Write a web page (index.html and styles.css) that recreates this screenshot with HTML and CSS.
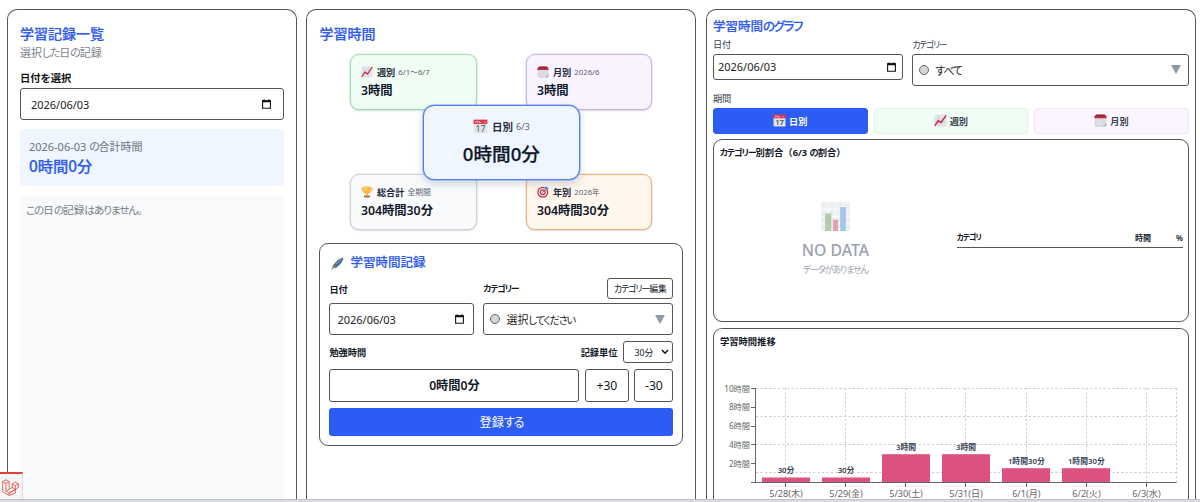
FILE: index.html
```html
<!DOCTYPE html>
<html lang="ja">
<head>
    <meta charset="UTF-8">
    <title>学習時間</title>
    <link rel="stylesheet" href="styles.css">
</head>
<body>
    <svg class="defs" width="0" height="0">
        <defs>
            <symbol id="i-date" viewBox="0 0 9 10">
                <path d="M0.6 1.8h7.8v7.4H0.6z" fill="none" stroke="#111" stroke-width="1.1"/>
                <path d="M0.2 1.3h8.6v2H0.2zM1.6 0.2h1v1.4h-1zM6.4 0.2h1v1.4h-1z" fill="#111"/>
            </symbol>
            <symbol id="i-week" viewBox="0 0 24 24">
                <rect x="1" y="1" width="22" height="22" rx="2" fill="#e3e5e8"/>
                <path d="M1 8h22M1 15h22M8 1v22M15 1v22" stroke="#cdd2d6" stroke-width="1.2"/>
                <path d="M2 21l6-9 5 4L22 3" fill="none" stroke="#cf1f3f" stroke-width="2.5" stroke-linejoin="round" stroke-linecap="round"/>
            </symbol>
            <symbol id="i-month" viewBox="0 0 24 24">
                <path d="M2 7h20v14l-2 2H4l-2-2z" fill="#dcdde3" stroke="#c6c8cf"/>
                <path d="M4 1h16l3 3v4H1V4z" fill="#b92b3f"/>
                <path d="M5 2.500h14" stroke="#7d2332" stroke-width="2"/>
                <path d="M16 23l7-7v5l-2 2z" fill="#b4b7bf"/>
            </symbol>
            <symbol id="i-day" viewBox="0 0 24 24">
                <path d="M1 7h22v16H1z" fill="#e3e5e9"/>
                <path d="M1 1h22v7H1z" fill="#dd3648"/>
                <path d="M4 6l2-3 2 3M10 3v3h3M18 5h2" fill="none" stroke="#fff" stroke-width="1.2"/>
                <text x="12" y="21" text-anchor="middle" font-size="14" fill="#4d5660">17</text>
            </symbol>
            <symbol id="i-cup" viewBox="0 0 24 24">
                <path d="M6 4H2v2c0 4 2 6 6 7M18 4h4v2c0 4-2 6-6 7" fill="none" stroke="#eda62f" stroke-width="2"/>
                <path d="M5 1h14v8c0 4-3 6-5 7v3h-4v-3c-2-1-5-3-5-7z" fill="#f6b83c"/>
                <path d="M8 2h3v9c-2-1-3-3-3-5z" fill="#ffd878"/>
                <path d="M6 19h12v4H6z" fill="#b46a4c"/>
            </symbol>
            <symbol id="i-target" viewBox="0 0 24 24">
                <circle cx="11.500" cy="12.500" r="11" fill="#cf3044"/>
                <circle cx="11.500" cy="12.500" r="8.500" fill="#f4e9eb"/>
                <circle cx="11.500" cy="12.500" r="6" fill="#cf3044"/>
                <circle cx="11.500" cy="12.500" r="3.500" fill="#f4e9eb"/>
                <path d="M11 13l8-8" stroke="#4c5c6b" stroke-width="1.6"/>
                <path d="M16 7V3l3-3 1 3 4 1-4 4z" fill="#5a93cf"/>
            </symbol>
            <symbol id="i-pen" viewBox="0 0 24 24">
                <path d="M0 24l4-9 4 4z" fill="#8b9198"/>
                <path d="M4 16C8 8 15 3 23 1c-1 8-7 15-15 19z" fill="#4b6f93"/>
                <path d="M9 13L20 3" stroke="#9fb5c4" stroke-width="1.6"/>
                <path d="M4 15l6 5" stroke="#6e7d62" stroke-width="3"/>
            </symbol>
            <symbol id="i-bars" viewBox="0 0 28 28">
                <rect width="28" height="28" rx="2" fill="#eceff1"/>
                <path d="M0 7h28M0 14h28M0 21h28M7 0v28M14 0v28M21 0v28" stroke="#fafbfc" stroke-width="1"/>
                <path d="M4 11h6v17H4z" fill="#b4cba8"/>
                <path d="M11.5 17h5v11h-5z" fill="#ea9fad"/>
                <path d="M18.500 5h5.500v23h-5.500z" fill="#a2c5ea"/>
            </symbol>
        </defs>
    </svg>

    <main class="columns">
        <section class="panel list">
            <h1>学習記録一覧</h1>
            <p class="lead">選択<span class="kana">した</span>日<span class="kana">の</span>記録</p>
            <h3>日付を選択</h3>
            <div class="field date wide">2026/06/03<svg><use href="#i-date"/></svg></div>
            <div class="total">
                <p>2026-06-03 <span class="kana">の</span>合計時間</p>
                <strong>0時間0分</strong>
            </div>
            <div class="records"><span class="kana">この</span>日<span class="kana">の</span>記録<span class="kana">はありません。</span></div>
        </section>

        <section class="panel time">
            <h1>学習時間</h1>
            <div class="summary">
                <div class="card week">
                    <p><svg><use href="#i-week"/></svg><b>週別</b><small>6/1〜6/7</small></p>
                    <strong>3時間</strong>
                </div>
                <div class="card month">
                    <p><svg><use href="#i-month"/></svg><b>月別</b><small>2026/6</small></p>
                    <strong>3時間</strong>
                </div>
                <div class="card all">
                    <p><svg><use href="#i-cup"/></svg><b>総合計</b><small>全期間</small></p>
                    <strong>304時間30分</strong>
                </div>
                <div class="card year">
                    <p><svg><use href="#i-target"/></svg><b>年別</b><small>2026年</small></p>
                    <strong>304時間30分</strong>
                </div>
                <div class="card day">
                    <p><svg><use href="#i-day"/></svg><b>日別</b><small>6/3</small></p>
                    <strong>0時間0分</strong>
                </div>
            </div>

            <div class="form">
                <h2><svg><use href="#i-pen"/></svg>学習時間記録</h2>
                <div class="pair">
                    <div class="col-date">
                        <div class="label-row"><b>日付</b></div>
                        <div class="field date">2026/06/03<svg><use href="#i-date"/></svg></div>
                    </div>
                    <div class="col-cat">
                        <div class="label-row"><b class="kana small">カテゴリー</b><button class="edit"><span class="kana">カテゴリー</span>編集</button></div>
                        <div class="field select"><i class="dot"></i>選択<span class="kana small">してください</span><i class="arrow"></i></div>
                    </div>
                </div>
                <div class="unit-row">
                    <b>勉強時間</b><b class="unit">記録単位</b>
                    <div class="unit-select">30分<svg viewBox="0 0 8 6"><path d="M1 1l3 3.200L7 1" fill="none" stroke="#111" stroke-width="1.5"/></svg></div>
                </div>
                <div class="step-row">
                    <output>0時間0分</output>
                    <button>+30</button>
                    <button class="minus">-30</button>
                </div>
                <button class="submit">登録<span class="kana">する</span></button>
            </div>
        </section>

        <section class="panel graph">
            <h2>学習時間<span class="kana">のグラフ</span></h2>
            <div class="filters">
                <div>
                    <label>日付</label>
                    <div class="field date">2026/06/03<svg><use href="#i-date"/></svg></div>
                </div>
                <div>
                    <label><span class="kana small">カテゴリー</span></label>
                    <div class="field select"><i class="dot"></i><span class="kana">すべて</span><i class="arrow"></i></div>
                </div>
            </div>
            <label>期間</label>
            <div class="tabs">
                <button class="active"><svg><use href="#i-day"/></svg>日別</button>
                <button class="week"><svg><use href="#i-week"/></svg>週別</button>
                <button class="month"><svg><use href="#i-month"/></svg>月別</button>
            </div>
            <div class="box ratio">
                <h4><span class="kana small">カテゴリー</span>別割合（6/3 <span class="kana">の</span>割合）</h4>
                <div class="ratio-body">
                    <div class="nodata">
                        <svg><use href="#i-bars"/></svg>
                        <strong>NO DATA</strong>
                        <p><span class="kana small">データがありません</span></p>
                    </div>
                    <div class="thead"><span class="kana small">カテゴリ</span><span>時間</span><span>%</span></div>
                </div>
            </div>
            <div class="box trend">
                <h4>学習時間推移</h4>
                <svg class="chart" viewBox="713 350 476 149">
                    <g stroke="#ccc" stroke-dasharray="2.200 2.200">
                        <path d="M755 388.500H1175.500M755 416.500H1175.500M755 444.500H1175.500M755 472.500H1175.500"/>
                        <path d="M784.500 388v94M844.500 388v94M904.500 388v94M964.500 388v94M1025.500 388v94M1085.500 388v94M1145.500 388v94M1175.500 388v94"/>
                    </g>
                    <g fill="#dd517e">
                        <rect x="761" y="477.500" width="48" height="4.500"/>
                        <rect x="821" y="477.500" width="48" height="4.500"/>
                        <rect x="881" y="454.200" width="48" height="27.800"/>
                        <rect x="941" y="454.200" width="48" height="27.800"/>
                        <rect x="1001" y="468.200" width="48" height="13.800"/>
                        <rect x="1061" y="468.200" width="48" height="13.800"/>
                    </g>
                    <path d="M754.500 388v94M750 482.500H1175.500M750 388.500h5M750 407.500h5M750 426.500h5M750 444.500h5M750 463.500h5M784.500 482v5M844.500 482v5M904.500 482v5M964.500 482v5M1025.500 482v5M1085.500 482v5M1145.500 482v5" fill="none" stroke="#666"/>
                    <g class="y-axis">
                        <text x="749" y="391.500">10時間</text>
                        <text x="749" y="410.300">8時間</text>
                        <text x="749" y="429.200">6時間</text>
                        <text x="749" y="447.900">4時間</text>
                        <text x="749" y="466.500">2時間</text>
                    </g>
                    <g class="x-axis">
                        <text x="785" y="497">5/28(木)</text>
                        <text x="845" y="497">5/29(金)</text>
                        <text x="905" y="497">5/30(土)</text>
                        <text x="965" y="497">5/31(日)</text>
                        <text x="1025.300" y="497">6/1(月)</text>
                        <text x="1085.500" y="497">6/2(火)</text>
                        <text x="1145.500" y="497">6/3(水)</text>
                    </g>
                    <g class="values">
                        <text x="785" y="473">30分</text>
                        <text x="845" y="473">30分</text>
                        <text x="905" y="449.700">3時間</text>
                        <text x="965" y="449.700">3時間</text>
                        <text x="1025.300" y="463.600">1時間30分</text>
                        <text x="1085.300" y="463.600">1時間30分</text>
                    </g>
                </svg>
            </div>
        </section>
    </main>

    <div class="debugbar">
        <svg viewBox="0 0 50 52"><path d="M1 8l10-6 10 6v23l9-5V15l10-6 9 6v11l-9 6v11L21 50 1 39zM1 8l10 6 10-6M11 14v23l10 6M30 15l10 6 9-6M40 21v11l-19 11v7M30 26l10 6M21 31l-10 6M21 43l19-11" fill="none" stroke="#e0443a" stroke-width="2.400" stroke-linejoin="round"/></svg>
    </div>
    <div class="edge"></div>
</body>
</html>
```
FILE: styles.css
```css
* {
    box-sizing: border-box;
    margin: 0;
    padding: 0;
}
body {
    height: 502px;
    overflow: hidden;
    background: #fff;
    color: #111827;
    font-family: "Noto Sans", "Noto Sans CJK JP", sans-serif;
    font-size: 11px;
}
svg {
    flex: none;
}
.defs {
    position: absolute;
}
button {
    font-family: inherit;
    color: inherit;
    background: #fff;
    border: 1px solid #555;
    border-radius: 3px;
}
.kana {
    font-feature-settings: "palt";
    letter-spacing: -0.11em;
}
.small {
    font-size: 0.94em;
    letter-spacing: -0.12em;
}
.columns {
    display: grid;
    grid-template-columns: 290px 390px 490px;
    column-gap: 9.5px;
    padding: 9px 0 0 6.9px;
    height: 499px;
}
.panel {
    border: 1px solid #555;
    border-bottom: 0;
    border-radius: 10px 10px 0 0;
    min-width: 0;
}
h1, h2 {
    color: #2f5bee;
    font-weight: 500;
    -webkit-text-stroke: 0.2px;
}
h1 {
    font-size: 14px;
    line-height: 20px;
}
h2 {
    font-size: 12.5px;
    line-height: 18px;
}
.field {
    display: flex;
    align-items: center;
    border: 1px solid #555;
    border-radius: 3px;
    height: 32px;
    padding: 0 7px;
    color: #222;
    font-size: 11px;
}
.date svg {
    width: 9px;
    height: 10px;
    margin-left: auto;
}
.dot {
    width: 10px;
    height: 10px;
    border: 1px solid #666;
    border-radius: 50%;
    background: #d3d5d8;
    margin-right: 6px;
}
.select {
    padding-left: 6px;
}
.arrow {
    margin-left: auto;
    border: 5px solid transparent;
    border-top: 9px solid #9299a6;
    border-bottom: 0;
}

/* 学習記録一覧 */
.list {
    display: flex;
    flex-direction: column;
    padding: 14px 12px 0;
}
.lead {
    color: #7b818b;
    line-height: 18px;
}
.list h3 {
    font-size: 10.3px;
    line-height: 16px;
    margin: 8px 0 2px;
    color: #111;
}
.list .wide {
    padding: 0 12px 0 10px;
}
.total {
    margin: 9px 0 10px;
    height: 57px;
    padding: 9px;
    background: #eff6ff;
    border-radius: 4px;
    color: #6b7280;
    line-height: 18px;
}
.total strong {
    display: block;
    font-size: 15.3px;
    line-height: 21px;
    font-weight: 500;
    color: #2f5bee;
    -webkit-text-stroke: 0.2px;
}
.records {
    flex: 1;
    background: #f9fafb;
    border-radius: 4px;
    padding: 5px 6px;
    color: #777d87;
    font-size: 10.7px;
    line-height: 18px;
}

/* 学習時間 */
.time {
    padding: 14px 12px 0;
}
.summary {
    position: relative;
    display: grid;
    grid-template-columns: 127px 126px;
    grid-template-rows: 56px 56px;
    gap: 64px 49px;
    margin: 10px 0 13px 30.5px;
}
.card {
    border: 1.5px solid;
    border-radius: 9px;
    padding: 8px 10px;
    box-shadow: 0 0 0 0.5px rgba(120, 130, 150, .2), 0 1px 2px rgba(0, 0, 0, .12);
}
.card p {
    display: flex;
    align-items: center;
    height: 17px;
    gap: 4px;
    margin-bottom: 1px;
}
.card p svg {
    width: 12px;
    height: 12px;
}
.card b {
    font-size: 9.2px;
    font-weight: 600;
    color: #1e293b;
}
.card small {
    font-size: 7.8px;
    color: #5b6472;
    margin-left: -1px;
}
.card strong {
    display: block;
    font-size: 12.3px;
    line-height: 19px;
    font-weight: 600;
    color: #0f172a;
}
.card.week {
    background: #f0fdf4;
    border-color: #9be3b0;
}
.card.month {
    background: #f8f3ff;
    border-color: #ccb2f1;
}
.card.all {
    background: #f9fafb;
    border-color: #d1d5db;
}
.card.year {
    background: #fff7ed;
    border-color: #f1b470;
}
/* lies over the four corner cards */
.card.day {
    position: absolute;
    left: 73px;
    top: 51px;
    width: 157px;
    height: 75px;
    padding: 11px 0 0;
    border-color: #4f7df0;
    border-radius: 11px;
    background: #eff6ff;
    box-shadow: 0 0 0 0.5px #7da0f3, 0 4px 8px rgba(30, 60, 120, .2);
    text-align: center;
}
.day p {
    justify-content: center;
    height: 19px;
}
.day p svg {
    width: 15px;
    height: 15px;
}
.day b {
    font-size: 10.5px;
}
.day small {
    font-size: 9.2px;
}
.card.day strong {
    font-size: 18.6px;
    line-height: 34px;
    font-weight: 500;
    -webkit-text-stroke: 0.25px;
}
.form {
    height: 203px;
    width: 364px;
    border: 1px solid #555;
    border-radius: 9px;
    padding: 10px 9px;
    font-size: 9.2px;
}
.form h2 {
    display: flex;
    align-items: center;
    gap: 6px;
    padding-left: 2px;
}
.form h2 svg {
    width: 13px;
    height: 13px;
}
.pair {
    display: grid;
    grid-template-columns: 145px 190px;
    gap: 9px;
    margin-top: 6px;
}
.label-row {
    display: flex;
    align-items: center;
    justify-content: space-between;
    height: 21px;
    margin-bottom: 4px;
}
.edit {
    width: 66px;
    height: 21px;
    font-size: 8.8px;
    white-space: nowrap;
}
.pair .date {
    padding-right: 9px;
}
.unit-row {
    display: flex;
    align-items: center;
    margin-top: 6px;
}
.unit {
    margin: 0 6px 0 auto;
}
.unit-select {
    display: flex;
    align-items: center;
    justify-content: space-between;
    width: 50px;
    height: 22px;
    padding: 0 3px 0 10px;
    border: 1px solid #555;
    border-radius: 3px;
    font-size: 8.8px;
}
.unit-select svg {
    width: 8px;
    height: 6px;
}
.step-row {
    display: grid;
    grid-template-columns: 250px 44px 39px;
    gap: 5.5px;
    margin-top: 6px;
}
.step-row output,
.step-row button {
    height: 33px;
    font-size: 12.2px;
    line-height: 31px;
    text-align: center;
    border: 1px solid #555;
    border-radius: 3px;
}
.step-row output {
    font-weight: 600;
}
.submit {
    display: block;
    width: 344px;
    height: 28px;
    margin-top: 6px;
    border: 0;
    background: #2b5cf3;
    color: #fff;
    font-size: 12.2px;
    line-height: 27px;
}

/* グラフ */
.graph {
    padding: 7.5px 6px 0;
}
.graph label {
    display: block;
    font-size: 9.2px;
    line-height: 18px;
    color: #374151;
}
.filters {
    display: grid;
    grid-template-columns: 190.5px 276.5px;
    gap: 9px;
    margin-bottom: 4px;
}
.graph .date {
    height: 26px;
    padding: 0 6px 0 4px;
}
.tabs {
    display: grid;
    grid-template-columns: repeat(3, 1fr);
    gap: 6px;
}
.tabs button {
    display: flex;
    align-items: center;
    justify-content: center;
    gap: 3px;
    height: 26px;
    font-size: 9.2px;
    font-weight: 600;
    color: #374151;
}
.tabs svg {
    width: 13px;
    height: 13px;
}
.tabs .active {
    background: #2b5cf3;
    border-color: #2b5cf3;
    color: #fff;
}
.tabs .week {
    background: #f0fdf4;
    border-color: #dcf5e4;
}
.tabs .month {
    background: #faf5ff;
    border-color: #efe5fa;
}
.box {
    border: 1px solid #555;
    border-radius: 9px;
    margin-top: 5.5px;
}
.box h4 {
    font-size: 9.3px;
    line-height: 16px;
    padding: 5px 7px 0 6px;
}
.ratio {
    height: 183px;
}
.ratio-body {
    display: grid;
    grid-template-columns: 243px 226px;
    align-items: center;
    height: 155px;
}
.nodata {
    text-align: center;
    color: #99a1af;
    font-size: 9.5px;
    padding-top: 3px;
}
.nodata svg {
    display: block;
    width: 29px;
    height: 29px;
    margin: 0 auto 8px;
}
.nodata strong {
    display: block;
    font-size: 15.8px;
    line-height: 22px;
    font-weight: 500;
}
.nodata p {
    line-height: 18px;
}
.thead {
    display: grid;
    grid-template-columns: 1fr 50px 32px;
    border-bottom: 1px solid #555;
    height: 19px;
    font-size: 8px;
    font-weight: 600;
    line-height: 17px;
}
.thead span + span {
    text-align: right;
}
.trend {
    height: 171px;
    margin-top: 6px;
    border-bottom: 0;
    border-radius: 9px 9px 0 0;
}
.chart {
    display: block;
    width: 476px;
    height: 149px;
}
.chart text {
    text-anchor: middle;
}
.chart .y-axis text {
    text-anchor: end;
    font-size: 8.2px;
    fill: #666;
}
.x-axis {
    font-size: 9.1px;
    fill: #666;
}
.values {
    font-size: 7.8px;
    font-weight: 600;
    fill: #334155;
}

/* fixed to the bottom of the window */
.debugbar {
    position: fixed;
    left: 0;
    bottom: 3px;
    width: 23px;
    height: 27px;
    padding: 5px 0 0 2px;
    background: #f5f5f5;
    border-top: 2px solid #dd4337;
    border-right: 1px solid #ddd;
}
.debugbar svg {
    width: 17px;
    height: 17px;
}
.edge {
    position: fixed;
    left: 0;
    right: 0;
    bottom: 0;
    height: 3px;
    background: #d9dae2;
    border-top: 1px solid #bfc1cd;
}
```
